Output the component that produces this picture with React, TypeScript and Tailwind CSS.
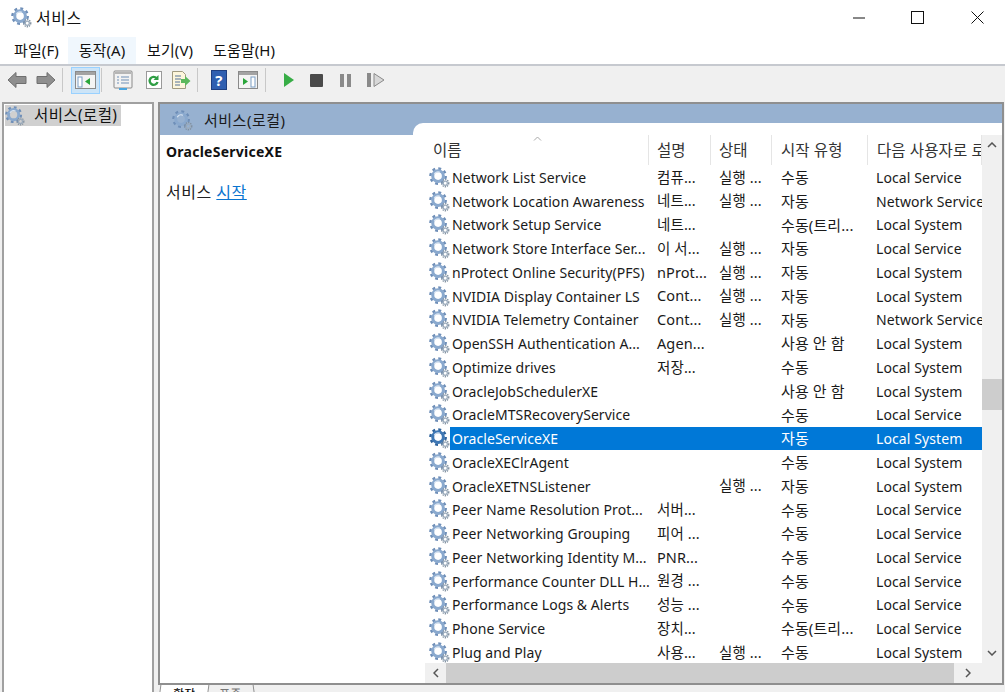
const font = { fontFamily: '"Noto Sans", "Noto Sans CJK KR", sans-serif' };

const rows = [
  ['Network List Service', '컴퓨...', '실행 ...', '수동', 'Local Service'],
  ['Network Location Awareness', '네트...', '실행 ...', '자동', 'Network Service'],
  ['Network Setup Service', '네트...', '', '수동(트리...', 'Local System'],
  ['Network Store Interface Ser...', '이 서...', '실행 ...', '자동', 'Local Service'],
  ['nProtect Online Security(PFS)', 'nProt...', '실행 ...', '자동', 'Local System'],
  ['NVIDIA Display Container LS', 'Cont...', '실행 ...', '자동', 'Local System'],
  ['NVIDIA Telemetry Container', 'Cont...', '실행 ...', '자동', 'Network Service'],
  ['OpenSSH Authentication A...', 'Agen...', '', '사용 안 함', 'Local System'],
  ['Optimize drives', '저장...', '', '수동', 'Local System'],
  ['OracleJobSchedulerXE', '', '', '사용 안 함', 'Local System'],
  ['OracleMTSRecoveryService', '', '', '수동', 'Local Service'],
  ['OracleServiceXE', '', '', '자동', 'Local System'],
  ['OracleXEClrAgent', '', '', '수동', 'Local System'],
  ['OracleXETNSListener', '', '실행 ...', '자동', 'Local System'],
  ['Peer Name Resolution Prot...', '서버...', '', '수동', 'Local Service'],
  ['Peer Networking Grouping', '피어 ...', '', '수동', 'Local Service'],
  ['Peer Networking Identity M...', 'PNR...', '', '수동', 'Local Service'],
  ['Performance Counter DLL H...', '원경 ...', '', '수동', 'Local Service'],
  ['Performance Logs & Alerts', '성능 ...', '', '수동', 'Local Service'],
  ['Phone Service', '장치...', '', '수동(트리...', 'Local Service'],
  ['Plug and Play', '사용...', '실행 ...', '수동', 'Local System'],
];

function Gear({ size = 22, dark = false }: { size?: number; dark?: boolean }) {
  const main = dark ? '#3f78b5' : '#8aa9ce';
  const edge = dark ? '#2f639c' : '#6f8fb8';
  return (
    <svg width={size} height={size} viewBox="0 0 22 22" className="shrink-0">
      <circle cx="9.5" cy="9.5" r="8" fill="none" stroke={edge} strokeWidth="2.6" strokeDasharray="3 3.28" />
      <circle cx="9.5" cy="9.5" r="5.6" fill="none" stroke={main} strokeWidth="3.2" />
      <path d="M5.500 7.500a4.500 4.500 0 0 1 6-2" fill="none" stroke="#dbe6f2" strokeWidth="1.300" />
      <circle cx="17" cy="17" r="3.7" fill="none" stroke="#7f8f9f" strokeWidth="1.4" strokeDasharray="1.4 1" />
      <circle cx="17" cy="17" r="2.2" fill="none" stroke="#9aaabb" strokeWidth="1.3" />
    </svg>
  );
}

function Arrow({ flip = false }: { flip?: boolean }) {
  return (
    <svg width="20" height="18" viewBox="0 0 20 18" className={flip ? '-scale-x-100' : ''}>
      <path d="M1 9 9 1.500V5.500H19V12.500H9V16.500Z" fill="#8f8f8f" stroke="#6f6f6f" strokeWidth="1" strokeLinejoin="round" />
    </svg>
  );
}

function Sep() {
  return <div className="w-px h-[24px] bg-[#c8c8c8] shrink-0" />;
}

function Toolbar() {
  return (
    <div className="h-[28px] bg-[#f0f0f0] flex items-center pl-[7px] shrink-0">
      <Arrow />
      <div className="w-[9px]" />
      <Arrow flip />
      <div className="w-[6px]" />
      <Sep />
      <div className="w-[8px]" />
      <div className="w-[29px] h-[27px] bg-[#cce4f7] border border-[#99d1ff] flex items-center justify-center shrink-0">
        <svg width="21" height="18" viewBox="0 0 21 18">
          <rect x=".5" y=".5" width="20" height="17" fill="#f4f4f4" stroke="#8a8a8a" />
          <rect x="1" y="1" width="19" height="3" fill="#a3a3a3" />
          <rect x="3" y="6" width="4" height="10" fill="#fff" stroke="#7d9fc6" />
          <path d="M15 7v7l-5-3.500Z" fill="#2aa53a" />
        </svg>
      </div>
      <div className="w-px" />
      <Sep />
      <div className="w-[11px]" />
      <svg width="20" height="20" viewBox="0 0 20 20">
        <rect x="1" y="1" width="18" height="17" rx="1" fill="#f2f2f2" stroke="#8a8a8a" />
        <rect x="2" y="2" width="16" height="2" fill="#b5b5b5" />
        <path d="M4 7h2M8 7h8M4 10h2M8 10h8M4 13h2M8 13h8" stroke="#6f8fb5" />
        <rect x="6" y="18" width="8" height="2" fill="#49a5e0" />
      </svg>
      <div className="w-[13px]" />
      <svg width="16" height="20" viewBox="0 0 16 20">
        <rect x=".5" y="1.500" width="15" height="17" fill="#fff" stroke="#9a9a9a" />
        <path d="M11.500 12a4 4 0 1 1-1-4" fill="none" stroke="#2f9e44" strokeWidth="2.400" />
        <path d="M12.500 5v5h-5Z" fill="#2f9e44" />
      </svg>
      <div className="w-[9px]" />
      <svg width="20" height="20" viewBox="0 0 20 20">
        <path d="M1.500 1.500h10l3 3v14h-13Z" fill="#fdf6dc" stroke="#a09a80" />
        <path d="M4 6h6M4 9h6M4 12h5M4 15h5" stroke="#55729a" />
        <path d="M10 9h4V6l5.500 5-5.500 5v-3h-4Z" fill="#5cb85c" />
      </svg>
      <div className="w-[6px]" />
      <Sep />
      <div className="w-[13px]" />
      <div className="w-[16px] h-[20px] bg-[#2f5fb0] border border-[#1f3f80] flex items-center justify-center text-white text-[15px] font-bold leading-none shrink-0" style={font}>?</div>
      <div className="w-[11px]" />
      <svg width="20" height="18" viewBox="0 0 20 18">
        <rect x=".5" y=".5" width="19" height="17" fill="#f4f4f4" stroke="#8a8a8a" />
        <rect x="1" y="1" width="18" height="3" fill="#a3a3a3" />
        <rect x="13" y="6" width="4" height="10" fill="#fff" stroke="#7d9fc6" />
        <path d="M5 7v7l5-3.500Z" fill="#2aa53a" />
      </svg>
      <div className="w-[7px]" />
      <Sep />
      <div className="w-[18px]" />
      <svg width="10" height="14" viewBox="0 0 10 14"><path d="M0 0 10 7 0 14Z" fill="#37ad46" /></svg>
      <div className="w-[16px]" />
      <div className="w-[13px] h-[13px] bg-[#4a4a4a] rounded-[1px] shrink-0" />
      <div className="w-[17px]" />
      <div className="w-[11px] h-[13px] flex justify-between shrink-0">
        <div className="w-[4px] bg-[#8a8a8a]" />
        <div className="w-[4px] bg-[#8a8a8a]" />
      </div>
      <div className="w-[16px]" />
      <svg width="18" height="14" viewBox="0 0 18 14">
        <rect x="0" y="0" width="4" height="14" fill="#8a8a8a" />
        <path d="M7 .5 17 7 7 13.500Z" fill="#d8d8d8" stroke="#8a8a8a" />
      </svg>
    </div>
  );
}

function ServiceRow({ r }: { r: string[] }) {
  const selected = r[0] === 'OracleServiceXE';
  return (
    <div className="h-[23.75px] flex items-center shrink-0">
      <div className="w-[25px] flex justify-end pt-[1px] shrink-0">
        <Gear size={21} dark={selected} />
      </div>
      <div className={`flex-1 h-[23px] flex items-center pt-[1px] whitespace-nowrap ${selected ? 'bg-[#0078d7] text-white' : 'text-[#1a1a1a]'}`}>
        <div className="w-[207px] pl-[2px] tracking-[0.06px] shrink-0">{r[0]}</div>
        <div className="w-[62px] text-[14.5px] shrink-0">{r[1]}</div>
        <div className="w-[62px] text-[14.5px] shrink-0">{r[2]}</div>
        <div className="w-[95px] text-[15px] shrink-0">{r[3]}</div>
        <div className="flex-1 overflow-hidden">{r[4]}</div>
      </div>
    </div>
  );
}

function Header() {
  const cols = [
    { label: '이름', w: 'w-[224px] pl-[8px]' },
    { label: '설명', w: 'w-[62px] pl-[8px]' },
    { label: '상태', w: 'w-[61px] pl-[8px]' },
    { label: '시작 유형', w: 'w-[96px] pl-[9px]' },
    { label: '다음 사용자로 로그온', w: 'flex-1 pl-[9px]' },
  ];
  return (
    <div className="h-[30px] flex items-center shrink-0 relative">
      {cols.map((c) => (
        <div key={c.label} className={`${c.w} h-[30px] flex items-center pt-[2px] border-r border-[#e5e5e5] overflow-hidden whitespace-nowrap text-[15.5px] text-[#333] shrink-0`}>
          {c.label}
        </div>
      ))}
      <svg width="9" height="5" viewBox="0 0 9 5" className="absolute left-[108px] top-[1px]">
        <path d="M1 4.500 4.500 1 8 4.500" fill="none" stroke="#a8a8a8" />
      </svg>
    </div>
  );
}

export default function App() {
  return (
    <div className="w-[1005px] h-[692px] overflow-hidden bg-white flex flex-col text-[14px] tracking-[0.1px]" style={font}>
      <div className="h-[37px] flex items-center pl-[11px] pb-[2px] shrink-0">
        <Gear size={21} />
        <span className="ml-[4px] text-[16px] text-[#111] tracking-[0.5px]">서비스</span>
        <div className="flex-1" />
        <svg width="12" height="2" viewBox="0 0 12 2"><path d="M0 1h12" stroke="#111" /></svg>
        <div className="w-[46px]" />
        <svg width="13" height="13" viewBox="0 0 13 13"><rect x=".5" y=".5" width="12" height="12" fill="none" stroke="#111" /></svg>
        <div className="w-[47px]" />
        <svg width="13" height="13" viewBox="0 0 13 13"><path d="M.5.5l12 12M12.500.5l-12 12" stroke="#111" /></svg>
        <div className="w-[21px]" />
      </div>

      <div className="h-[27px] flex items-center shrink-0 text-[15px] text-[#111]">
        <div className="pl-[14px] w-[68px]">파일(F)</div>
        <div className="w-[68px] h-[27px] bg-[#f0f7fd] flex items-center justify-center">동작(A)</div>
        <div className="pl-[11px] w-[77px]">보기(V)</div>
        <div>도움말(H)</div>
      </div>
      <div className="h-[2px] bg-[#c6c9cf] shrink-0" />

      <Toolbar />
      <div className="h-[8px] bg-[#f0f0f0] shrink-0" />

      <div className="flex-1 flex min-h-0 bg-[#f0f0f0]">
        <div className="w-[152px] ml-[2px] h-full bg-white border-x-2 border-t-2 border-[#a0a0a0] shrink-0 pt-[1px] pl-[1px]">
          <div className="w-[116px] h-[21px] pt-[1px] bg-[#d0d0d0] flex items-center text-[15.5px] text-[#111] whitespace-nowrap">
            <Gear size={20} />
            <span className="ml-[9px] tracking-[0.4px]">서비스(로컬)</span>
          </div>
        </div>

        <div className="w-[846px] ml-[4px] flex flex-col shrink-0">
          <div className="h-[583px] bg-white border-2 border-[#8f8f8f] flex shrink-0">
            <div className="w-[253px] flex flex-col shrink-0">
              <div className="h-[31px] bg-[#97b1d0] flex items-center pl-[12px] pt-[1px] text-[15px] text-[#1a1a1a] shrink-0">
                <Gear size={21} />
                <span className="ml-[11px] tracking-[0.5px]">서비스(로컬)</span>
              </div>
              <div className="pl-[6px] pt-[6px]">
                <div className="font-bold tracking-[0.25px] text-[#111]">OracleServiceXE</div>
                <div className="mt-[18px] text-[16px] tracking-[0.5px] text-[#222]">
                  서비스 <span className="text-[#0a74d0] underline">시작</span>
                </div>
              </div>
            </div>

            <div className="flex-1 bg-[#97b1d0] flex flex-col min-w-0 pt-[19px]">
              <div className="flex-1 bg-white rounded-tl-[10px] flex flex-col min-h-0 pl-[12px] pt-[12px]">
                <div className="flex flex-1 min-h-0">
                  <div className="flex-1 flex flex-col min-w-0 overflow-hidden">
                    <Header />
                    {rows.map((r) => <ServiceRow key={r[0]} r={r} />)}
                  </div>
                  <div className="w-[20px] bg-[#f0f0f0] flex flex-col items-center shrink-0">
                    <svg width="10" height="6" viewBox="0 0 10 6" className="mt-[7px]"><path d="M1 5 5 1l4 4" fill="none" stroke="#555" strokeWidth="1.500" /></svg>
                    <div className="mt-[231px] w-full h-[31px] bg-[#cdcdcd]" />
                    <div className="flex-1" />
                    <svg width="10" height="6" viewBox="0 0 10 6" className="mb-[7px]"><path d="M1 1l4 4 4-4" fill="none" stroke="#555" strokeWidth="1.500" /></svg>
                  </div>
                </div>
                <div className="h-[20px] bg-[#f0f0f0] flex items-center shrink-0">
                  <div className="w-[21px] flex justify-center shrink-0">
                    <svg width="6" height="10" viewBox="0 0 6 10"><path d="M5 1 1 5l4 4" fill="none" stroke="#555" strokeWidth="1.500" /></svg>
                  </div>
                  <div className="w-[508px] h-full bg-[#cdcdcd] shrink-0" />
                  <div className="flex-1 flex justify-center pr-[20px]">
                    <svg width="6" height="10" viewBox="0 0 6 10"><path d="M1 1l4 4-4 4" fill="none" stroke="#555" strokeWidth="1.500" /></svg>
                  </div>
                </div>
              </div>
            </div>
          </div>
          <div className="flex pl-[1px] h-[7px] overflow-hidden text-[12px]">
            <div className="w-[49px] h-[20px] bg-white border-x border-[#8f8f8f] text-center pt-[3px] leading-[12px] skew-x-[-8deg]">확장</div>
            <div className="w-[47px] h-[20px] border-r border-[#8f8f8f] text-center pt-[3px] text-[#777] leading-[12px] skew-x-[8deg]">표준</div>
          </div>
        </div>
      </div>
    </div>
  );
}
